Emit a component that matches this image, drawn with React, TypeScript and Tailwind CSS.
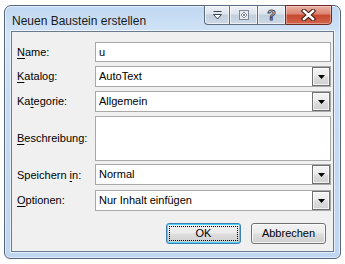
import React from "react";

const font = { fontFamily: '"Liberation Sans", Arial, sans-serif' };

function Mn({ children }: { children: React.ReactNode }) {
  return <span className="underline underline-offset-[2px] decoration-[1px]">{children}</span>;
}

function Arrow() {
  return (
    <svg width="7" height="4" viewBox="0 0 7 4">
      <path d="M0 0H7L3.5 4Z" fill="#000" />
    </svg>
  );
}

function TextBox({ value, combo, tall }: { value?: string; combo?: boolean; tall?: boolean }) {
  return (
    <div className={`flex border border-[#a9a9a9] bg-white ${tall ? "h-[45px]" : "h-full"}`}>
      <div className="flex-1 flex items-center pl-[3px] text-[11px] text-black leading-none">
        <span>{value}</span>
      </div>
      {combo && (
        <div className="w-[18px] h-full border border-[#707070] bg-[linear-gradient(to_bottom,#f4f4f4,#ebebeb_45%,#dddddd_55%,#d0d0d0)] shadow-[inset_0_0_0_1px_rgba(255,255,255,0.7)] flex items-center justify-center">
          <Arrow />
        </div>
      )}
    </div>
  );
}

function Label({ children }: { children: React.ReactNode }) {
  return (
    <div className="flex items-center text-[11px] text-black leading-none">
      <span className="whitespace-pre">{children}</span>
    </div>
  );
}

const grayCap =
  "h-full border border-[#5e6e82] border-r-0 bg-[linear-gradient(to_bottom,#eef2f7,#dbe3ec_45%,#c2cfdd_50%,#cdd9e6)] shadow-[inset_0_0_0_1px_rgba(255,255,255,0.6)] flex items-center justify-center";

export default function App() {
  return (
    <div className="w-[345px] h-[264px] bg-white pt-[5px] pl-[4px]" style={font}>
      <div className="w-[337px] h-[254px] rounded-t-[7px] rounded-b-[6px] border border-[#56657a] bg-[linear-gradient(to_bottom,#c0d8f2,#d3e4f7_12%,#c6dcf3_40%,#bfd6f0)] shadow-[inset_0_0_0_1px_rgba(255,255,255,0.55)] flex flex-col">
        {/* Title bar */}
        <div className="h-[25px] flex items-start justify-between pl-[7px] pr-[8px]">
          <div className="pt-[8px] text-[12px] leading-[14px] text-[#1a1a1a]">Neuen Baustein erstellen</div>
          <div className="flex h-[20px] -mt-[1px]">
            <div className={`w-[25px] rounded-bl-[4px] ${grayCap}`}>
              <svg width="9" height="10" viewBox="0 0 9 10">
                <path d="M0.5 1.5H8.5" stroke="#3b4654" strokeWidth="1" />
                <path d="M0.5 4.5H8.5L4.5 9Z" fill="#fff" stroke="#3b4654" strokeWidth="1" strokeLinejoin="round" />
              </svg>
            </div>
            <div className={`w-[28px] ${grayCap}`}>
              <svg width="10" height="10" viewBox="0 0 10 10">
                <rect x="0.5" y="0.5" width="9" height="9" fill="#e8ecf1" stroke="#7d8795" />
                <path d="M5 2L8 5L5 8L2 5Z" fill="#fff" stroke="#7d8795" />
                <rect x="4" y="4" width="2" height="2" fill="#7d8795" />
              </svg>
            </div>
            <div className={`w-[28px] ${grayCap}`}>
              <span className="text-[14px] font-bold leading-none text-white [-webkit-text-stroke:1px_#3b4654]">?</span>
            </div>
            <div className="w-[47px] h-full rounded-br-[4px] border border-[#6e2a22] bg-[linear-gradient(to_bottom,#eab1a4,#dc8572_45%,#c8472f_50%,#d0664c)] shadow-[inset_0_0_0_1px_rgba(255,255,255,0.35)] flex items-center justify-center">
              <svg width="15" height="12" viewBox="0 0 15 12">
                <path d="M3 2L12 10M12 2L3 10" stroke="#3d1a14" strokeWidth="4.5" strokeLinecap="square" />
                <path d="M3 2L12 10M12 2L3 10" stroke="#fff" strokeWidth="2.5" strokeLinecap="square" />
              </svg>
            </div>
          </div>
        </div>

        {/* Client area */}
        <div className="mx-[6px] h-[221px] border border-[#6a7b8f] bg-[#f0f0f0] shadow-[0_0_0_1px_rgba(255,255,255,0.6)] pt-[10px] pl-[5px] pr-[2px] pb-[8px] flex flex-col">
          <div className="grid grid-cols-[78px_1fr] grid-rows-[20px_21px_21px_45px_21px_21px] gap-y-[4px]">
            <Label>
              <Mn>N</Mn>ame:
            </Label>
            <TextBox value="u" />
            <Label>
              <Mn>K</Mn>atalog:
            </Label>
            <TextBox value="AutoText" combo />
            <Label>
              Ka<Mn>t</Mn>egorie:
            </Label>
            <TextBox value="Allgemein" combo />
            <Label>
              <Mn>B</Mn>eschreibung:
            </Label>
            <TextBox tall />
            <div className="-mt-[1px] flex">
              <Label>
                {"Speichern "}
                <Mn>i</Mn>n:
              </Label>
            </div>
            <div className="-mt-[1px] h-[21px]">
              <TextBox value="Normal" combo />
            </div>
            <Label>
              <Mn>O</Mn>ptionen:
            </Label>
            <TextBox value="Nur Inhalt einfügen" combo />
          </div>
          <div className="mt-[12px] flex justify-end gap-[10px] pr-[5px]">
            <div className="w-[75px] h-[21px] rounded-[3px] border border-[#3c7fb1] bg-[linear-gradient(to_bottom,#f2f2f2,#ebebeb_45%,#dddddd_55%,#cfcfcf)] shadow-[inset_0_0_0_1px_#48d2fb] p-[2px]">
              <div className="w-full h-full border border-dotted border-black flex items-center justify-center text-[11px] leading-none text-black">
                OK
              </div>
            </div>
            <div className="w-[75px] h-[21px] rounded-[3px] border border-[#707070] bg-[linear-gradient(to_bottom,#f2f2f2,#ebebeb_45%,#dddddd_55%,#cfcfcf)] shadow-[inset_0_0_0_1px_rgba(255,255,255,0.8)] flex items-center justify-center text-[11px] leading-none text-black">
              Abbrechen
            </div>
          </div>
        </div>
      </div>
    </div>
  );
}
